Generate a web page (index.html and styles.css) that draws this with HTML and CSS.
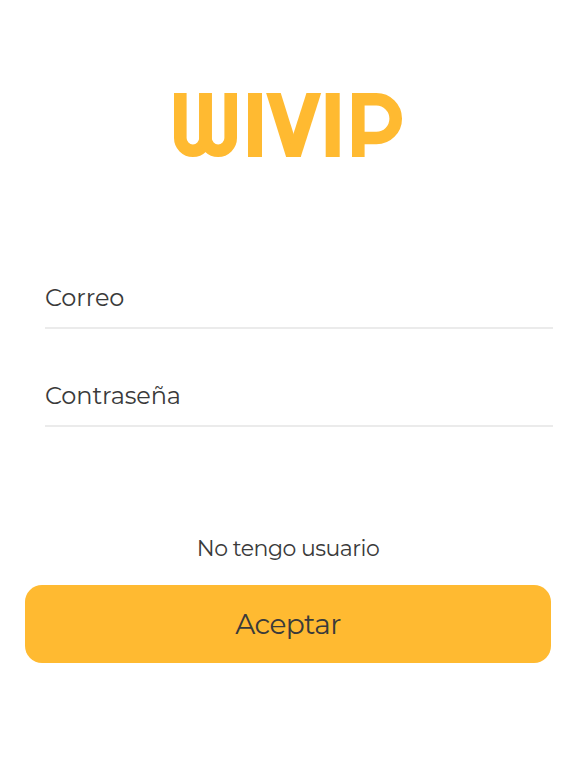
FILE: index.html
```
<!DOCTYPE html>
<html lang="es">

    <head>
        <meta charset="UTF-8">
        <meta name="viewport" content="width=device-width, initial-scale=1.0">
        <title>WIVIP</title>
        <link rel="stylesheet" href="styles.css">
    </head>

    <body>
        <form class="login">
            <svg class="logo" viewBox="0 0 228 64" role="img" aria-label="WIVIP">
                <g fill="none" stroke="#ffba31" stroke-width="12.6">
                    <rect x="6.3" y="-40" width="25.2" height="97.7" rx="12.6" />
                    <rect x="31.5" y="-40" width="25.2" height="97.7" rx="12.6" />
                    <line x1="81" y1="0" x2="81" y2="64" stroke-width="14" />
                    <line x1="96.3" y1="-10" x2="122.6" y2="74" stroke-width="14" />
                    <line x1="143" y1="-10" x2="116.2" y2="74" stroke-width="14" />
                    <line x1="158.7" y1="0" x2="158.7" y2="64" stroke-width="14" />
                    <line x1="184.3" y1="0" x2="184.3" y2="64" />
                    <svg x="178" y="0" width="50" height="64">
                        <rect x="-40" y="6.3" width="83.7" height="38.7" rx="19.3" />
                    </svg>
                </g>
            </svg>
            <input class="field" type="email" placeholder="Correo">
            <input class="field" type="password" placeholder="Contraseña">
            <a class="register">No tengo usuario</a>
            <button class="submit" type="button">Aceptar</button>
        </form>
    </body>

</html>
```
FILE: styles.css
```
body {
    margin: 0;
    background-color: #fff;
    color: #3a3a3a;
    font-family: Montserrat, Inter, sans-serif;
    font-weight: 400;
}

.login {
    display: flex;
    flex-direction: column;
    padding: 93px 25px 0;
}

.logo {
    align-self: center;
    width: 228px;
    height: 64px;
    margin-bottom: 108px;
}

.field {
    height: 64px;
    box-sizing: border-box;
    margin: 0 -2px 34px 20px;
    padding: 2px 0 0;
    border: none;
    border-bottom: 2px solid #ebebeb;
    background: none;
    color: inherit;
    font: inherit;
    font-size: 24px;
    letter-spacing: -0.1px;
    outline: none;
}

.field::placeholder {
    color: #3a3a3a;
    opacity: 1;
}

.register {
    margin-top: 72px;
    height: 52px;
    line-height: 32px;
    font-size: 22px;
    letter-spacing: -0.5px;
    text-align: center;
}

.submit {
    height: 78px;
    padding: 0;
    border: none;
    border-radius: 17px;
    background-color: #ffba31;
    color: #3a3a3a;
    font: inherit;
    font-size: 28px;
    letter-spacing: -0.6px;
    cursor: pointer;
}
```
